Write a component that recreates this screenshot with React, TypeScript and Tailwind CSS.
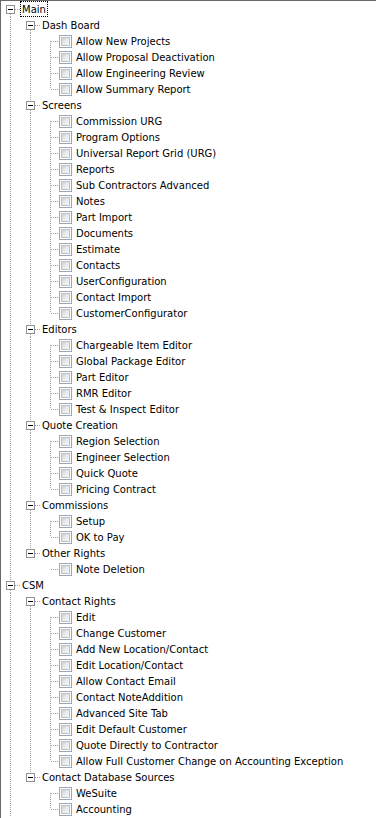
import React from "react";

type TNode = { label: string; children?: TNode[]; more?: boolean };

const tree: TNode[] = [
  {
    label: "Main",
    children: [
      {
        label: "Dash Board",
        children: [
          { label: "Allow New Projects" },
          { label: "Allow Proposal Deactivation" },
          { label: "Allow Engineering Review" },
          { label: "Allow Summary Report" },
        ],
      },
      {
        label: "Screens",
        children: [
          { label: "Commission URG" },
          { label: "Program Options" },
          { label: "Universal Report Grid (URG)" },
          { label: "Reports" },
          { label: "Sub Contractors Advanced" },
          { label: "Notes" },
          { label: "Part Import" },
          { label: "Documents" },
          { label: "Estimate" },
          { label: "Contacts" },
          { label: "UserConfiguration" },
          { label: "Contact Import" },
          { label: "CustomerConfigurator" },
        ],
      },
      {
        label: "Editors",
        children: [
          { label: "Chargeable Item Editor" },
          { label: "Global Package Editor" },
          { label: "Part Editor" },
          { label: "RMR Editor" },
          { label: "Test & Inspect Editor" },
        ],
      },
      {
        label: "Quote Creation",
        children: [
          { label: "Region Selection" },
          { label: "Engineer Selection" },
          { label: "Quick Quote" },
          { label: "Pricing Contract" },
        ],
      },
      {
        label: "Commissions",
        children: [{ label: "Setup" }, { label: "OK to Pay" }],
      },
      {
        label: "Other Rights",
        children: [{ label: "Note Deletion" }],
      },
    ],
  },
  {
    label: "CSM",
    more: true,
    children: [
      {
        label: "Contact Rights",
        children: [
          { label: "Edit" },
          { label: "Change Customer" },
          { label: "Add New Location/Contact" },
          { label: "Edit Location/Contact" },
          { label: "Allow Contact Email" },
          { label: "Contact NoteAddition" },
          { label: "Advanced Site Tab" },
          { label: "Edit Default Customer" },
          { label: "Quote Directly to Contractor" },
          { label: "Allow Full Customer Change on Accounting Exception" },
        ],
      },
      {
        label: "Contact Database Sources",
        children: [{ label: "WeSuite" }, { label: "Accounting" }],
      },
    ],
  },
];

type Row = {
  label: string;
  level: number;
  guides: boolean[];
  first: boolean;
  last: boolean;
  parentNode: boolean;
  focused: boolean;
};

function flatten(nodes: TNode[], level: number, guides: boolean[], out: Row[]) {
  nodes.forEach((n, i) => {
    const last = i === nodes.length - 1 && !n.more;
    out.push({
      label: n.label,
      level,
      guides,
      first: i === 0,
      last,
      parentNode: !!n.children,
      focused: level === 0 && i === 0,
    });
    if (n.children) flatten(n.children, level + 1, [...guides, !last], out);
  });
  return out;
}

const rows = flatten(tree, 0, [], []);

const DOT = "#a0a0a0";

function Guide({ on }: { on: boolean }) {
  return (
    <svg width="20" height="16" className="block shrink-0">
      {on && <line x1="9.5" y1="0" x2="9.5" y2="16" stroke={DOT} strokeDasharray="1 1" />}
    </svg>
  );
}

function OwnCell({ row }: { row: Row }) {
  const top = !row.first;
  const bottom = !row.last;
  if (row.parentNode) {
    return (
      <svg width="20" height="16" className="block shrink-0">
        {top && <line x1="9.5" y1="0" x2="9.5" y2="4" stroke={DOT} strokeDasharray="1 1" />}
        {bottom && <line x1="9.5" y1="13" x2="9.5" y2="16" stroke={DOT} strokeDasharray="1 1" />}
        <line x1="14" y1="8.5" x2="20" y2="8.5" stroke={DOT} strokeDasharray="1 1" />
        <rect x="5.5" y="4.5" width="8" height="8" fill="#fff" stroke="#919191" />
        <line x1="7" y1="8.5" x2="12" y2="8.5" stroke="#000" />
      </svg>
    );
  }
  return (
    <svg width="18" height="16" className="block shrink-0">
      {top && <line x1="9.5" y1="0" x2="9.5" y2="8" stroke={DOT} strokeDasharray="1 1" />}
      {bottom && <line x1="9.5" y1="8" x2="9.5" y2="16" stroke={DOT} strokeDasharray="1 1" />}
      <line x1="10" y1="8.5" x2="18" y2="8.5" stroke={DOT} strokeDasharray="1 1" />
    </svg>
  );
}

function CheckBox() {
  return (
    <div className="mt-[2px] flex h-[13px] w-[13px] shrink-0 items-center justify-center border border-[#9aa6b8] bg-white">
      <div className="h-[9px] w-[9px] border border-[#bcc1c7] bg-[linear-gradient(135deg,#cfd2d6_0%,#e6e8ea_50%,#f8f8f8_100%)]" />
    </div>
  );
}

export default function App() {
  return (
    <div
      className="min-h-screen w-[376px] overflow-hidden border-l border-t border-[#696969] bg-white text-[10px] leading-4 text-black"
      style={{ fontFamily: '"DejaVu Sans", Verdana, sans-serif' }}
    >
      {rows.map((r, idx) => (
        <div key={idx} className="flex h-4 items-start whitespace-nowrap">
          {r.guides.map((g, i) => (
            <Guide key={i} on={g} />
          ))}
          <OwnCell row={r} />
          {r.parentNode ? (
            <span
              className={
                "ml-[-1px] h-4 px-[1px] leading-[15px] " +
                (r.focused ? "border border-dotted border-black" : "border border-transparent")
              }
            >
              {r.label}
            </span>
          ) : (
            <>
              <CheckBox />
              <span className="ml-[4px] h-4 leading-[17px]">{r.label}</span>
            </>
          )}
        </div>
      ))}
    </div>
  );
}
